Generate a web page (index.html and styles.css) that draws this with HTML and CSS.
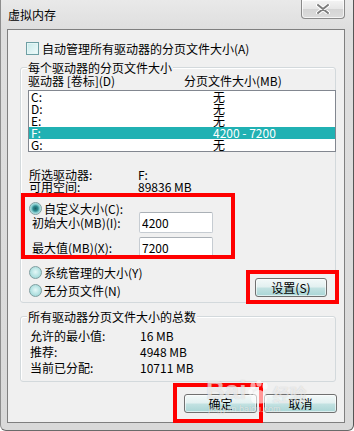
FILE: index.html
```html
<!DOCTYPE html>
<html lang="zh-CN">
<head>
    <meta charset="UTF-8">
    <meta name="viewport" content="width=device-width, initial-scale=1.0">
    <title>虚拟内存</title>
    <link rel="stylesheet" href="styles.css">
</head>
<body>
    <div class="window">
        <div class="titlebar">
            <span class="title">虚拟内存</span>
            <button class="close" type="button">
                <svg width="14" height="10" viewBox="0 0 14 10">
                    <path d="M2 1 L12 9 M12 1 L2 9" stroke="#ffffff" stroke-width="4" stroke-linecap="round"/>
                    <path d="M2 1 L12 9 M12 1 L2 9" stroke="#7d7d7d" stroke-width="2" stroke-linecap="round"/>
                </svg>
            </button>
        </div>

        <div class="client">
            <div class="check-row"><span class="checkbox"></span>自动管理所有驱动器的分页文件大小(A)</div>

            <div class="group group-drives">
                <div class="legend">每个驱动器的分页文件大小</div>
                <div class="list-head"><span class="col-drive">驱动器 [卷标](D)</span><span>分页文件大小(MB)</span></div>
                <div class="listbox">
                    <div class="item"><span class="col-name">C:</span><span>无</span></div>
                    <div class="item"><span class="col-name">D:</span><span>无</span></div>
                    <div class="item"><span class="col-name">E:</span><span>无</span></div>
                    <div class="item selected"><span class="col-name">F:</span><span>4200 - 7200</span></div>
                    <div class="item"><span class="col-name">G:</span><span>无</span></div>
                </div>

                <div class="info">
                    <div class="info-row"><span class="info-label">所选驱动器:</span><span>F:</span></div>
                    <div class="info-row"><span class="info-label">可用空间:</span><span>89836 MB</span></div>
                </div>

                <div class="radio-row custom"><span class="radio checked"></span>自定义大小(C):</div>
                <div class="field first"><span class="field-label">初始大小(MB)(I):</span><input type="text" value="4200"></div>
                <div class="field"><span class="field-label">最大值(MB)(X):</span><input type="text" value="7200"></div>

                <div class="bottom-row">
                    <div class="radios">
                        <div class="radio-row"><span class="radio"></span>系统管理的大小(Y)</div>
                        <div class="radio-row"><span class="radio"></span>无分页文件(N)</div>
                    </div>
                    <button class="btn btn-set" type="button">设置(S)</button>
                </div>
            </div>

            <div class="group group-total">
                <div class="legend">所有驱动器分页文件大小的总数</div>
                <div class="totals">
                    <div class="total-row"><span class="total-label">允许的最小值:</span><span>16 MB</span></div>
                    <div class="total-row"><span class="total-label">推荐:</span><span>4948 MB</span></div>
                    <div class="total-row"><span class="total-label">当前已分配:</span><span>10711 MB</span></div>
                </div>
            </div>

            <div class="actions">
                <button class="btn" type="button">确定</button>
                <button class="btn" type="button">取消</button>
            </div>
        </div>

        <!-- red annotation boxes -->
        <div class="mark mark-custom"></div>
        <div class="mark mark-set"></div>
        <div class="mark mark-ok"></div>

        <div class="watermark">
            <div class="wm-logo">
                <span>Bai</span>
                <svg width="22" height="24" viewBox="0 0 22 24">
                    <ellipse cx="5" cy="6" rx="2.6" ry="3.4" fill="rgba(255,255,255,0.6)"/>
                    <ellipse cx="11" cy="3.5" rx="2.6" ry="3.2" fill="rgba(255,255,255,0.6)"/>
                    <ellipse cx="17" cy="6" rx="2.6" ry="3.4" fill="rgba(255,255,255,0.6)"/>
                    <ellipse cx="2.5" cy="12" rx="2.2" ry="3" fill="rgba(255,255,255,0.6)"/>
                    <path d="M11 10 C16 10 21 18 18 22 C15 24 7 24 4 22 C1 18 6 10 11 10 Z" fill="rgba(255,255,255,0.6)"/>
                </svg>
                <span class="wm-cn">经验</span>
            </div>
            <div class="wm-url">jingyan.baidu.com</div>
        </div>
    </div>
</body>
</html>
```

FILE: styles.css
```css
body {
    margin: 0;
    font-family: "Noto Sans CJK SC", "Liberation Sans", sans-serif;
    font-size: 12px;
    line-height: 13px;
    color: #000000;
    background-color: #ffffff;
}
.window {
    position: relative;
    width: 354px;
    height: 431px;
    box-sizing: border-box;
    border-left: 1px solid #8d8d8d;
    border-right: 1px solid #555555;
    border-bottom: 1px solid #6a6a6a;
    border-radius: 0 0 6px 6px;
    background: linear-gradient(#e9e9e9, #dedede 30px, #d9d9d9);
    overflow: hidden;
}
.titlebar {
    height: 29px;
    display: flex;
    justify-content: space-between;
    align-items: flex-start;
    padding: 0 8px 0 7px;
}
.title {
    margin-top: 8px;
}
.close {
    width: 44px;
    height: 19px;
    padding: 0;
    border: 1px solid #8a8a8a;
    border-top: none;
    border-radius: 0 0 4px 4px;
    background: linear-gradient(#f4f4f4, #e6e6e6 50%, #d4d4d4 51%, #dcdcdc);
    box-shadow: inset 0 0 0 1px rgba(255, 255, 255, 0.7);
    display: flex;
    align-items: center;
    justify-content: center;
}
.client {
    margin-left: 6px;
    width: 338px;
    height: 394px;
    box-sizing: border-box;
    border: 1px solid #7f7f7f;
    background-color: #f0f0f0;
    padding-top: 12px;
}
.check-row {
    display: flex;
    align-items: center;
    gap: 3px;
    height: 13px;
    padding-left: 18px;
}
.checkbox {
    width: 13px;
    height: 13px;
    box-sizing: border-box;
    border: 1px solid #6e9fa4;
    background: linear-gradient(135deg, #c6eaea, #f2fbfb);
    box-shadow: inset 0 0 0 1px #e4f6f6;
}
.group {
    margin-left: 12px;
    width: 316px;
    box-sizing: border-box;
    border: 1px solid #d3d9dc;
    border-radius: 3px;
    box-shadow: inset 1px 1px 0 #ffffff;
}
.group-drives {
    margin-top: 12px;
    padding-bottom: 5px;
}
.group-total {
    margin-top: 13px;
    padding-bottom: 5px;
}
.legend {
    width: fit-content;
    margin-top: -7px;
    margin-left: 6px;
    padding: 0 1px;
    background-color: #f0f0f0;
}
.list-head {
    display: flex;
    padding-left: 7px;
}
.col-drive {
    width: 156px;
}
.listbox {
    margin: 3px 0 0 7px;
    width: 308px;
    box-sizing: border-box;
    border: 1px solid #828790;
    background-color: #ffffff;
}
.item {
    display: flex;
    height: 12px;
    line-height: 12px;
    padding-left: 2px;
}
.item.selected {
    background-color: #20b1b3;
    color: #ffffff;
}
.col-name {
    width: 182px;
}
.info {
    margin-top: 17px;
}
.info-row {
    display: flex;
    line-height: 12px;
    padding-left: 8px;
}
.info-label {
    width: 109px;
}
.radio-row {
    display: flex;
    align-items: center;
    gap: 2px;
    height: 13px;
    padding-left: 8px;
}
.radio-row.custom {
    margin-top: 9px;
    height: 12px;
}
.radio {
    width: 13px;
    height: 13px;
    box-sizing: border-box;
    border-radius: 50%;
    border: 1px solid #7f9ea0;
    background: radial-gradient(circle at 50% 45%, #e4f7f7 0, #b4e2e2 55%, #8fcfd0 100%);
}
.radio.checked {
    background: radial-gradient(circle, #1d5e64 0, #2d8a8f 2.5px, #7dc7c9 4px, #c8ecec 6px);
}
.field {
    display: flex;
    align-items: center;
    margin-top: 4px;
    padding-left: 11px;
}
.field.first {
    margin-top: -2px;
}
.field-label {
    width: 107px;
}
.field input {
    width: 74px;
    height: 21px;
    box-sizing: border-box;
    margin: 0;
    padding: 0 2px;
    border: 1px solid #c6ccd2;
    border-top-color: #aab0b6;
    border-radius: 2px;
    font-family: inherit;
    font-size: 12px;
    background-color: #ffffff;
}
.bottom-row {
    display: flex;
    justify-content: space-between;
    align-items: flex-end;
    margin-top: 8px;
    padding-right: 8px;
}
.radios {
    display: flex;
    flex-direction: column;
    gap: 5px;
}
.btn {
    width: 73px;
    height: 19px;
    padding: 0;
    border: 1px solid #707070;
    border-radius: 3px;
    font-family: inherit;
    font-size: 12px;
    color: #000000;
    background: linear-gradient(#f3f9f9, #e2f0f0 48%, #c3e2e2 52%, #a9d5d5);
    box-shadow: inset 0 0 0 1px rgba(255, 255, 255, 0.6);
}
.btn-set {
    width: 72px;
}
.totals {
    margin-top: 5px;
}
.total-row {
    display: flex;
    line-height: 16px;
    padding-left: 9px;
}
.total-label {
    width: 110px;
}
.actions {
    display: flex;
    justify-content: flex-end;
    gap: 7px;
    margin-top: 12px;
    padding-right: 7px;
}
.mark {
    position: absolute;
    border: 4px solid #ff0000;
    box-sizing: border-box;
}
.mark-custom {
    left: 20px;
    top: 193px;
    width: 214px;
    height: 66px;
}
.mark-set {
    left: 245px;
    top: 270px;
    width: 93px;
    height: 34px;
}
.mark-ok {
    left: 172px;
    top: 383px;
    width: 90px;
    height: 40px;
}
.watermark {
    position: absolute;
    left: 205px;
    top: 376px;
    color: rgba(255, 255, 255, 0.6);
    text-shadow: 0 0 1px rgba(120, 120, 120, 0.35);
    pointer-events: none;
}
.wm-logo {
    display: flex;
    align-items: flex-end;
    gap: 2px;
    font-family: "Liberation Sans", sans-serif;
    font-weight: bold;
    font-size: 26px;
    line-height: 28px;
}
.wm-cn {
    font-family: "Noto Sans CJK SC", sans-serif;
    font-size: 17px;
    line-height: 20px;
}
.wm-url {
    font-family: "Liberation Sans", sans-serif;
    font-size: 9px;
    line-height: 10px;
    margin-left: 2px;
}
```
